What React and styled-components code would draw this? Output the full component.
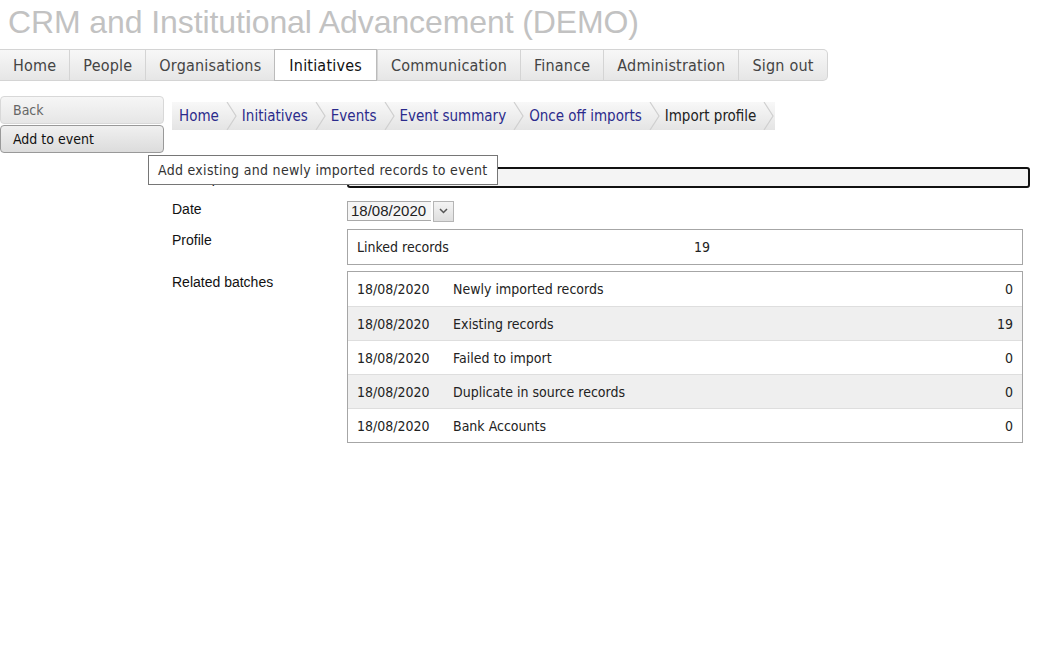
import styled, { createGlobalStyle } from 'styled-components';

const GlobalStyle = createGlobalStyle`
    body {
        margin: 0;
        background: #fff;
        font-family: "DejaVu Sans Condensed", "DejaVu Sans", sans-serif;
        color: #222;
    }
`;

const navItems = ['Home', 'People', 'Organisations', 'Initiatives', 'Communication', 'Finance', 'Administration', 'Sign out'];
const crumbs = ['Home', 'Initiatives', 'Events', 'Event summary', 'Once off imports', 'Import profile'];
const batches = [
    { date: '18/08/2020', name: 'Newly imported records', count: 0 },
    { date: '18/08/2020', name: 'Existing records', count: 19 },
    { date: '18/08/2020', name: 'Failed to import', count: 0 },
    { date: '18/08/2020', name: 'Duplicate in source records', count: 0 },
    { date: '18/08/2020', name: 'Bank Accounts', count: 0 },
];

const App = () => {
    return (
        <>
            <GlobalStyle />
            <Title>CRM and Institutional Advancement (DEMO)</Title>
            <Nav>
                {navItems.map((item) => (
                    <NavItem key={item} $active={item === 'Initiatives'}>{item}</NavItem>
                ))}
            </Nav>

            <Main>
                <Sidebar>
                    <SideButton>Back</SideButton>
                    <SideButton $primary>Add to event</SideButton>
                    <Tooltip>Add existing and newly imported records to event</Tooltip>
                </Sidebar>

                <Content>
                    <Breadcrumb>
                        {crumbs.map((c, i) => (
                            <Crumb key={c} $current={i === crumbs.length - 1}>
                                {c}
                                <Chevron viewBox="0 0 12 28" preserveAspectRatio="none">
                                    <polyline points="1,0 10,14 1,28" fill="none" stroke="#cfcfcf" strokeWidth="1.2" />
                                </Chevron>
                            </Crumb>
                        ))}
                    </Breadcrumb>

                    <Form>
                        <Label>Description</Label>
                        <TextInput />

                        <Label $top={0}>Date</Label>
                        <DateField>
                            <DateValue>18/08/2020</DateValue>
                            <DropButton>
                                <svg width="9" height="6" viewBox="0 0 9 6">
                                    <polyline points="1,1 4.5,4.5 8,1" fill="none" stroke="#555" strokeWidth="1.5" />
                                </svg>
                            </DropButton>
                        </DateField>

                        <Label>Profile</Label>
                        <Panel>
                            <ProfileRow>
                                <span>Linked records</span>
                                <span>19</span>
                            </ProfileRow>
                        </Panel>

                        <Label>Related batches</Label>
                        <Panel>
                            {batches.map((b, i) => (
                                <BatchRow key={b.name} $odd={i % 2 === 1}>
                                    <span>{b.date}</span>
                                    <span>{b.name}</span>
                                    <Count>{b.count}</Count>
                                </BatchRow>
                            ))}
                        </Panel>
                    </Form>
                </Content>
            </Main>
        </>
    );
};

const Title = styled.h1`
    margin: 0;
    padding: 4px 0 0 8px;
    height: 45px;
    box-sizing: border-box;
    font-family: "Liberation Sans", Arial, sans-serif;
    font-weight: normal;
    font-size: 32px;
    line-height: 36px;
    color: #c2c2c2;
    letter-spacing: -0.1px;
`;

const Nav = styled.nav`
    display: inline-flex;
    margin-top: 4px;
    border: 1px solid #d4d4d4;
    border-left: none;
    border-radius: 0 5px 5px 0;
    background: linear-gradient(#f7f7f7, #e6e6e6);
    height: 30px;
`;

const NavItem = styled.div`
    display: flex;
    align-items: center;
    padding: 0 ${(p) => (p.$active ? '14px' : '13px')};
    font-size: 16px;
    letter-spacing: 0.2px;
    color: ${(p) => (p.$active ? '#111' : '#444')};
    background: ${(p) => (p.$active ? '#fff' : 'transparent')};
    margin: ${(p) => (p.$active ? '-1px 0' : '0')};
    border: ${(p) => (p.$active ? '1px solid #bbb' : 'none')};
    border-left: 1px solid ${(p) => (p.$active ? '#bbb' : '#d4d4d4')};
    &:first-child {
        border-left: none;
    }
`;

const Main = styled.div`
    display: flex;
    gap: 8px;
    margin-top: 15px;
`;

const Sidebar = styled.div`
    position: relative;
    width: 164px;
    flex: none;
    display: flex;
    flex-direction: column;
    gap: 1px;
`;

const SideButton = styled.div`
    height: 28px;
    box-sizing: border-box;
    padding: 5px 0 0 12px;
    font-size: 14px;
    color: ${(p) => (p.$primary ? '#111' : '#666')};
    background: ${(p) => (p.$primary ? 'linear-gradient(#f0f0f0, #dcdcdc)' : 'linear-gradient(#f6f6f6, #e6e6e6)')};
    border: 1px solid ${(p) => (p.$primary ? '#999' : '#d8d8d8')};
    border-radius: 4px;
`;

const Tooltip = styled.div`
    position: absolute;
    top: 59px;
    left: 148px;
    z-index: 2;
    white-space: nowrap;
    background: #fff;
    border: 1px solid #767676;
    padding: 5px 10px 5px 9px;
    font-size: 14px;
    letter-spacing: 0.3px;
    color: #333;
    line-height: 18px;
`;

const Content = styled.div`
    flex: 1;
    padding-right: 29px;
`;

const Breadcrumb = styled.div`
    display: inline-flex;
    margin-top: 6px;
    height: 28px;
    background: linear-gradient(#f8f8f8, #e4e4e4);
`;

const Crumb = styled.div`
    position: relative;
    display: flex;
    align-items: center;
    padding: 0 19px 0 7px;
    font-size: 15px;
    color: ${(p) => (p.$current ? '#222' : '#2b2b8c')};
    & + & {
        padding-left: 4px;
    }
`;

const Chevron = styled.svg`
    position: absolute;
    right: 0;
    top: 0;
    width: 12px;
    height: 28px;
`;

const Form = styled.div`
    display: grid;
    grid-template-columns: 175px 1fr;
    row-gap: 6px;
    margin-top: 37px;
`;

const Label = styled.div`
    font-family: "Liberation Sans", Arial, sans-serif;
    font-size: 14px;
    color: #111;
    padding-top: ${(p) => (p.$top ?? 3)}px;
`;

const TextInput = styled.div`
    height: 21px;
    box-sizing: border-box;
    margin-right: -7px;
    background: #f4f4f4;
    border: 2px solid #111;
    border-radius: 3px;
    margin-bottom: 7px;
`;

const DateField = styled.div`
    display: flex;
    align-items: center;
    gap: 2px;
    height: 20px;
    margin-bottom: 2px;
`;

const DateValue = styled.div`
    width: 84px;
    height: 20px;
    box-sizing: border-box;
    border: 1px solid #a9a9a9;
    border-right: none;
    background: #f5f5f5;
    font-family: "Liberation Sans", Arial, sans-serif;
    font-size: 15px;
    line-height: 18px;
    padding-left: 3px;
`;

const DropButton = styled.div`
    width: 21px;
    height: 21px;
    box-sizing: border-box;
    border: 1px solid #b5b5b5;
    background: linear-gradient(#f4f4f4, #dedede);
    display: flex;
    align-items: center;
    justify-content: center;
`;

const Panel = styled.div`
    border: 1px solid #a6a6a6;
`;

const ProfileRow = styled.div`
    display: grid;
    grid-template-columns: 337px auto;
    padding: 9px 9px 9px;
    font-size: 14px;
    color: #222;
`;

const BatchRow = styled.div`
    display: grid;
    grid-template-columns: 96px 1fr auto;
    align-items: center;
    height: 34px;
    box-sizing: border-box;
    padding: 0 9px;
    font-size: 14px;
    color: #222;
    background: ${(p) => (p.$odd ? '#efefef' : '#fff')};
    border-top: 1px solid #dedede;
    &:first-child {
        border-top: none;
    }
`;

const Count = styled.span`
    text-align: right;
`;

export default App;
